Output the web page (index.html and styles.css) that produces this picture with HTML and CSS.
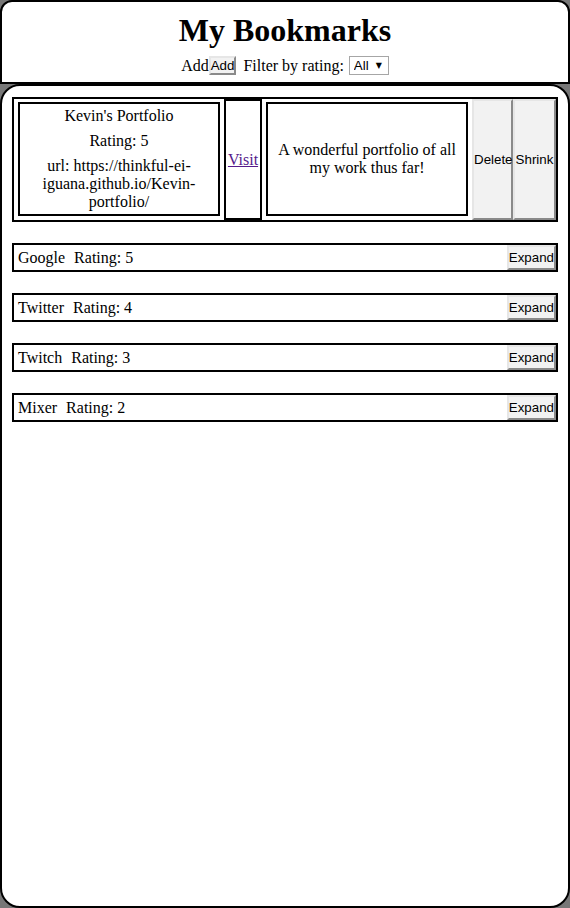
FILE: index.html
```html
<!doctype html>
<html lang="en">
  <head>
    <meta charset="UTF-8" />
    <meta name="viewport" content="width=device-width, initial-scale=1.0" />
    <title>My Bookmarks</title>
    <link rel="stylesheet" href="styles.css">
  </head>
  <body>
    <!-- Header -->
    <header class="top">
      <h1 class="title">My Bookmarks</h1>
      <div class="controls">
        <span>Add</span><button class="btn">Add</button>
        <span class="filter-label">Filter by rating:</span>
        <span class="select-wrap">
          <select class="rating-select">
            <option>All</option>
            <option>5</option>
            <option>4</option>
            <option>3</option>
            <option>2</option>
            <option>1</option>
          </select>
        </span>
      </div>
    </header>

    <!-- Bookmark list -->
    <main class="list">
      <div class="bookmark expanded">
        <div class="info">
          <p>Kevin's Portfolio</p>
          <p>Rating: 5</p>
          <p>url: https://thinkful-ei-iguana.github.io/Kevin-portfolio/</p>
        </div>
        <div class="visit"><a href="#">Visit</a></div>
        <div class="desc">A wonderful portfolio of all my work thus far!</div>
        <button class="btn">Delete</button>
        <button class="btn">Shrink</button>
      </div>

      <div class="bookmark">
        <span class="name">Google</span><span class="rating">Rating: 5</span>
        <button class="btn">Expand</button>
      </div>
      <div class="bookmark">
        <span class="name">Twitter</span><span class="rating">Rating: 4</span>
        <button class="btn">Expand</button>
      </div>
      <div class="bookmark">
        <span class="name">Twitch</span><span class="rating">Rating: 3</span>
        <button class="btn">Expand</button>
      </div>
      <div class="bookmark">
        <span class="name">Mixer</span><span class="rating">Rating: 2</span>
        <button class="btn">Expand</button>
      </div>
    </main>
  </body>
</html>
```

FILE: styles.css
```css
/* General */
html,
body {
  height: 100%;
}

body {
  margin: 0;
  display: flex;
  flex-direction: column;
  background-color: #777;
  font-family: "Liberation Serif", "Times New Roman", serif;
  font-size: 16px;
  color: #000;
}

.btn {
  font-family: "Liberation Sans", Arial, sans-serif;
  font-size: 13.33px;
  color: #000;
  background-color: #f2f2f2;
  padding: 0;
  border: 2px solid;
  border-color: #e6e6e6 #8a8a8a #8a8a8a #e6e6e6;
  cursor: pointer;
}

/* Header */
.top {
  background-color: #fff;
  border: 2px solid #000;
  border-radius: 12px 12px 0 0;
  padding: 10px 0 7px;
  text-align: center;
}

.title {
  margin: 0;
  font-size: 32px;
  font-weight: bold;
}

.controls {
  margin-top: 7px;
  display: flex;
  justify-content: center;
  align-items: center;
}

.controls .btn {
  height: 19px;
}

.filter-label {
  margin: 0 5px 0 7px;
}

.select-wrap {
  position: relative;
  display: inline-block;
}

.rating-select {
  appearance: none;
  -webkit-appearance: none;
  font-family: "Liberation Sans", Arial, sans-serif;
  font-size: 13.33px;
  color: #000;
  background-color: #fff;
  border: 1px solid #a6a6a6;
  border-radius: 0;
  height: 19px;
  width: 40px;
  padding: 0 0 0 4px;
}

.select-wrap::after {
  content: "\25BC";
  position: absolute;
  right: 7px;
  top: 5px;
  font-size: 8px;
  font-family: "DejaVu Sans", sans-serif;
  pointer-events: none;
}

/* List */
.list {
  flex: 1;
  background-color: #fff;
  border: 2px solid #000;
  border-radius: 20px;
  padding: 11px 10px;
}

.bookmark {
  display: flex;
  align-items: center;
  border: 2px solid #000;
  margin-bottom: 21px;
}

.bookmark .name {
  padding: 4px 0 3px 4px;
  margin-right: 9px;
}

.bookmark .rating {
  flex: 1;
}

.bookmark .btn {
  align-self: stretch;
}

/* Expanded bookmark */
.bookmark.expanded {
  align-items: stretch;
  height: 121px;
}

.info,
.desc {
  border: 2px solid #000;
  margin: 3px 4px 4px 4px;
  display: flex;
  flex-direction: column;
  justify-content: center;
  text-align: center;
}

.info {
  padding: 0 10px;
  width: 178px;
  gap: 7px;
}

.info p {
  margin: 0;
}

.visit {
  width: 34px;
  border: 2px solid #000;
  display: flex;
  align-items: center;
  justify-content: center;
}

.visit a {
  color: #551a8b;
}

.desc {
  padding: 0 9px;
  width: 180px;
}

.expanded .btn {
  width: 41px;
}

.expanded .btn:last-child {
  width: 43px;
}
```
